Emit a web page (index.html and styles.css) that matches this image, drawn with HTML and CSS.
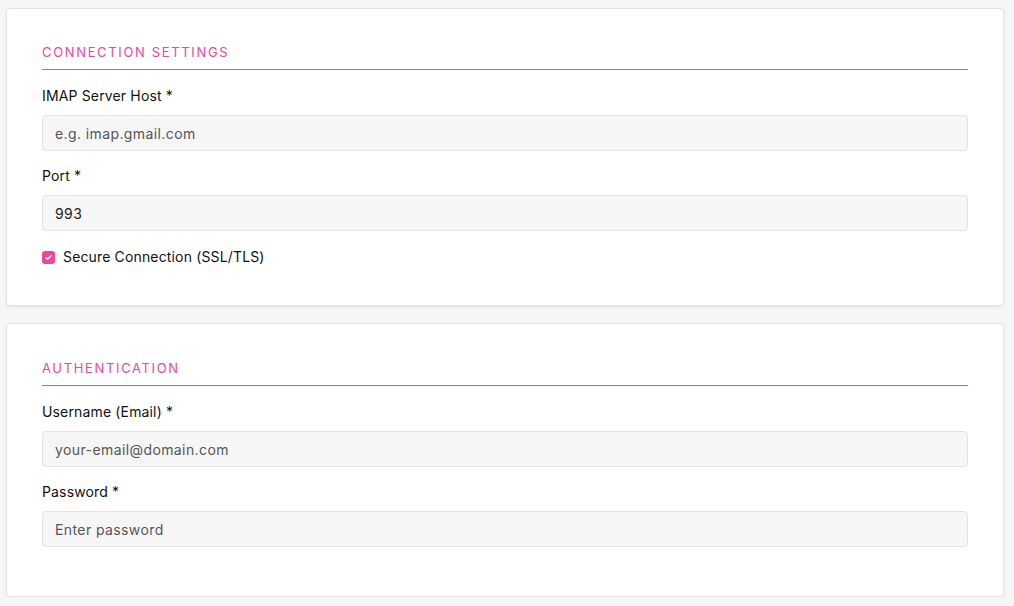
FILE: index.html
```html
<!DOCTYPE html>
<html>
<head>
<meta charset="utf-8">
<link rel="stylesheet" href="styles.css">
</head>
<body>
<div class="page">
  <section class="card">
    <h2 class="card-title">Connection Settings</h2>
    <div class="field">
      <label class="field-label">IMAP Server Host *</label>
      <input class="field-input" type="text" placeholder="e.g. imap.gmail.com">
    </div>
    <div class="field">
      <label class="field-label">Port *</label>
      <input class="field-input" type="text" value="993">
    </div>
    <label class="check-row">
      <span class="check-box"><svg viewBox="0 0 12 12" width="9" height="9"><path d="M2.5 6.2l2.2 2.1 4.8-4.8" fill="none" stroke="#fff" stroke-width="1.8" stroke-linecap="round" stroke-linejoin="round"/></svg></span>
      <span class="check-text">Secure Connection (SSL/TLS)</span>
    </label>
  </section>
  <section class="card card-auth">
    <h2 class="card-title">Authentication</h2>
    <div class="field">
      <label class="field-label">Username (Email) *</label>
      <input class="field-input" type="text" placeholder="your-email@domain.com">
    </div>
    <div class="field">
      <label class="field-label">Password *</label>
      <input class="field-input" type="password" placeholder="Enter password">
    </div>
  </section>
</div>
</body>
</html>
```

FILE: styles.css
```css
* { box-sizing: border-box; }
html, body { margin: 0; padding: 0; }
body {
  background: #f6f6f6;
  font-family: Inter, "Noto Sans", sans-serif;
  color: #111;
}
.page {
  padding: 8px 10px 0 6px;
  display: flex;
  flex-direction: column;
  gap: 17px;
}
.card {
  background: #fff;
  border: 1px solid #e4e4e4;
  border-radius: 4px;
  box-shadow: 0 1px 3px rgba(0,0,0,0.08);
  padding: 33px 35px 20px 35px;
}
.card-auth { padding-top: 34px; }
.card-title {
  margin: 0 0 16px 0;
  font-size: 13px;
  font-weight: 400;
  line-height: 20px;
  letter-spacing: 1.65px;
  text-transform: uppercase;
  color: #ec4899;
  padding-bottom: 7px;
  border-bottom: 1px solid #d8579b;
}
.field { display: flex; flex-direction: column; margin-bottom: 15px; }
.card-auth .field:last-child { margin-bottom: 29px; }
.field-label {
  font-size: 14px;
  line-height: 20px;
  margin-bottom: 9px;
  color: #111;
  letter-spacing: 0.15px;
}
.field-input {
  height: 36px;
  width: 100%;
  border: 1px solid #e2e2e2;
  border-radius: 4px;
  background: #f6f6f6;
  padding: 0 12px;
  font-family: inherit;
  font-size: 14px;
  letter-spacing: 0.4px;
  color: #222;
  outline: none;
}
.field-input::placeholder { color: #555; }
.check-row {
  display: flex;
  align-items: center;
  gap: 8px;
  height: 20px;
  margin-top: 16px;
  margin-bottom: 18px;
  font-size: 14px;
  letter-spacing: 0.15px;
}
.check-box {
  width: 13px;
  height: 13px;
  border-radius: 3px;
  background: #ec4899;
  display: flex;
  align-items: center;
  justify-content: center;
}
.check-box svg { display: block; }
.check-text { line-height: 20px; }
```
